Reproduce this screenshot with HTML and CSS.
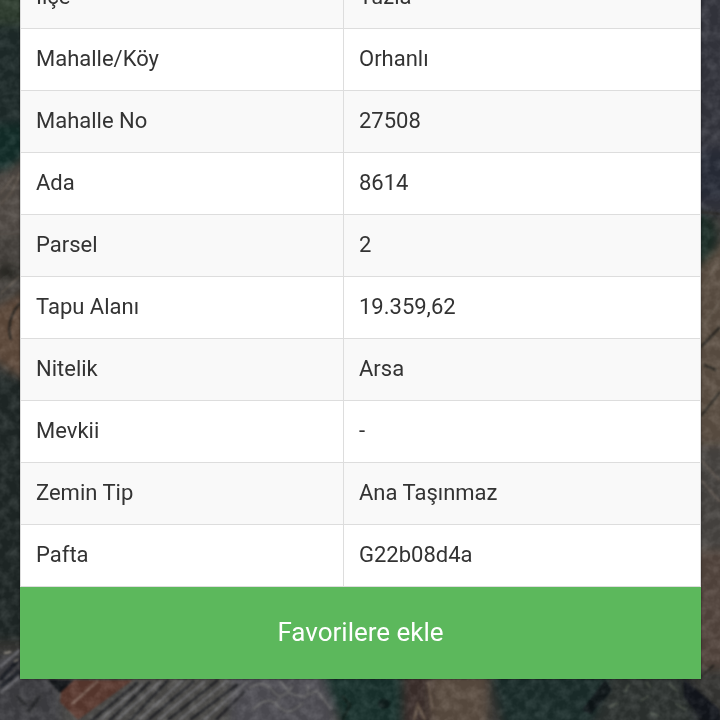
FILE: index.html
```html
<!DOCTYPE html>
<html lang="tr">
<head>
  <meta charset="UTF-8" />
  <meta name="viewport" content="width=device-width, initial-scale=1.0" />
  <title>Parsel Bilgisi</title>
  <link rel="stylesheet" href="styles.css">
</head>
<body>

<!-- satellite map -->
<svg class="map" viewBox="0 0 720 720" preserveAspectRatio="none" aria-hidden="true">
  <defs>
    <filter id="soft" x="-20%" y="-20%" width="140%" height="140%" color-interpolation-filters="sRGB"><feGaussianBlur stdDeviation="4"/></filter>
    <filter id="fine" color-interpolation-filters="sRGB"><feGaussianBlur stdDeviation="0.9"/></filter>
    <filter id="grain" x="0" y="0" width="100%" height="100%" color-interpolation-filters="sRGB">
      <feTurbulence type="fractalNoise" baseFrequency="0.1" numOctaves="3" seed="8"/>
      <feColorMatrix type="matrix" values="1.6 0 0 0 -0.58  1.6 0 0 0 -0.58  1.6 0 0 0 -0.58  0 0 0 0 0.12"/>
    </filter>
  </defs>
  <rect width="720" height="720" fill="#3b3b38"/>

  <!-- left edge -->
  <g filter="url(#soft)">
    <rect x="-20" y="-20" width="60" height="50" fill="#2f3f30"/>
    <rect x="-20" y="25" width="60" height="105" fill="#202e2d"/>
    <rect x="-20" y="125" width="60" height="45" fill="#14302c"/>
    <path d="M-20 190L40 145V260H-20Z" fill="#57504a"/>
    <rect x="-20" y="235" width="60" height="80" fill="#494540"/>
    <path d="M-20 315L40 285V390L-20 350Z" fill="#665040"/>
    <path d="M-20 368L40 385V640H-20Z" fill="#222b2a"/>
    <rect x="-20" y="655" width="100" height="80" fill="#434347"/>
    <ellipse cx="8" cy="272" rx="12" ry="5" fill="#24241f"/>
  </g>

  <!-- right edge -->
  <g filter="url(#soft)">
    <rect x="690" y="-20" width="60" height="235" fill="#383942"/>
    <rect x="690" y="150" width="60" height="50" fill="#2c303d"/>
    <ellipse cx="700" cy="238" rx="16" ry="26" fill="#1c2f28"/>
    <path d="M690 275L740 225V460H690Z" fill="#625548"/>
    <rect x="690" y="445" width="50" height="110" fill="#4d4946"/>
    <rect x="690" y="550" width="50" height="120" fill="#594b43"/>
  </g>

  <!-- bottom edge -->
  <g filter="url(#soft)">
    <rect x="60" y="670" width="210" height="60" fill="#52514f"/>
    <rect x="230" y="670" width="105" height="60" fill="#55545a"/>
    <path d="M322 670H405V730H345Z" fill="#1b3530"/>
    <rect x="402" y="670" width="28" height="60" fill="#40332f"/>
    <rect x="430" y="670" width="58" height="60" fill="#615246"/>
    <path d="M490 670H610V730H505Z" fill="#1d302e"/>
    <path d="M612 670H680L700 730H590Z" fill="#303634"/>
    <path d="M680 670L735 735H700Z" fill="#15181d"/>
  </g>

  <g filter="url(#fine)">
    <!-- sheds and roofs -->
    <path d="M62 680H133L78 720L60 702Z" fill="#603d33"/>
    <path d="M72 704L98 681" stroke="#8a7164" stroke-width="2"/>
    <path d="M48 680L60 693L74 680" fill="#14171b"/>
    <g stroke="#25262a" stroke-width="2.5">
      <path d="M90 722L138 682M108 722L150 682M129 722L168 680M146 722L194 681M168 720L218 680M190 720L238 684M216 720L245 691"/>
    </g>
    <g stroke="#77777a" stroke-width="2">
      <path d="M100 720L143 684M117 720L160 682M139 720L183 680M158 720L205 681M179 720L228 680M204 720L248 681"/>
    </g>
    <path d="M0 687L20 671M0 680L20 658" stroke="#1b1e25" stroke-width="4"/>
    <path d="M0 693L20 677M0 667L20 650" stroke="#6d6d72" stroke-width="3"/>
    <path d="M4 653l7-1M14 662l5-3" stroke="#969087" stroke-width="2"/>
    <path d="M28 712l12-16M17 697l10 9" stroke="#2a2b2e" stroke-width="3"/>
    <!-- rubble -->
    <g stroke="#898886" stroke-width="1.5" fill="none" opacity=".6">
      <path d="M249 688q15-9 24 3t19-5M276 703q6-14 20-8t12-9M253 710q14-16 25-4t24-3M305 696l12-5 14 18M280 681l12 14"/>
    </g>
    <!-- trees and road -->
    <ellipse cx="384" cy="704" rx="6" ry="5" fill="#101f1e"/>
    <path d="M342 720l8-15-8-9" stroke="#13231f" stroke-width="3" fill="none"/>
    <path d="M414 720l4-15 7 15M428 682l5 28" stroke="#6b5b4e" stroke-width="3" fill="none"/>
    <path d="M605 680L582 710L591 714L612 690Z" fill="#0e1619"/>
    <g stroke="#6c7365" stroke-width="2" opacity=".6">
      <path d="M609 707l9-4M625 692l4-8M640 701l9-5M650 713l9 3M669 684l8 7M646 682l5 6M676 704l10 6"/>
    </g>
    <path d="M684 680L720 710V725H709L684 697Z" fill="#14171e"/>
    <!-- tracks at the sides -->
    <g stroke="#807367" stroke-width="2" fill="none" opacity=".5">
      <path d="M0 204Q14 194 20 173M0 194L14 176M0 294L20 276M701 288L720 260M701 329L720 302M701 480L720 502M701 460L720 481"/>
    </g>
    <g stroke="#262420" stroke-width="2" fill="none">
      <path d="M20 303Q5 320 11 340M701 347L720 327M701 416L720 392M701 212L720 214M701 677L714 665M704 365L716 370"/>
    </g>
  </g>
  <rect width="720" height="720" filter="url(#grain)"/>
</svg>

<!-- parcel popup -->
<main class="popup">
  <table class="parcel">
    <tbody>
      <tr><th scope="row">İlçe</th><td>Tuzla</td></tr>
      <tr><th scope="row">Mahalle/Köy</th><td>Orhanlı</td></tr>
      <tr><th scope="row">Mahalle No</th><td>27508</td></tr>
      <tr><th scope="row">Ada</th><td>8614</td></tr>
      <tr><th scope="row">Parsel</th><td>2</td></tr>
      <tr><th scope="row">Tapu Alanı</th><td>19.359,62</td></tr>
      <tr><th scope="row">Nitelik</th><td>Arsa</td></tr>
      <tr><th scope="row">Mevkii</th><td>-</td></tr>
      <tr><th scope="row">Zemin Tip</th><td>Ana Taşınmaz</td></tr>
      <tr><th scope="row">Pafta</th><td>G22b08d4a</td></tr>
    </tbody>
  </table>
  <button type="button" class="favorite">Favorilere ekle</button>
</main>

</body>
</html>
```
FILE: styles.css
```css
/* page base */
* {
  box-sizing: border-box;
}

body {
  margin: 0;
  min-height: 100vh;
  overflow: hidden;
  background: #3b3b38;
  color: #333;
  font-family: Roboto, sans-serif;
  font-size: 22px;
  line-height: 30px;
}

/* map behind the popup */
.map {
  position: fixed;
  inset: 0;
  z-index: -1;
  width: 100%;
  height: 100%;
}

/* popup, scrolled to its last rows */
.popup {
  margin: -34px 19px 0 20px;
  background: #fff;
  box-shadow: 0 0 2px rgba(0, 0, 0, 0.6);
}

/* parcel table */
.parcel {
  width: 100%;
  table-layout: fixed;
  border-collapse: collapse;
}

.parcel th,
.parcel td {
  height: 62px;
  padding: 14px 15px 16px;
  border: 1px solid #ddd;
  font-weight: normal;
  text-align: left;
}

.parcel th {
  width: 323px;
}

.parcel tr:nth-child(odd) {
  background: #f9f9f9;
}

/* favorite button */
.favorite {
  display: block;
  width: 100%;
  padding: 30px 16px 32px;
  border: 0;
  background: #5cb85c;
  color: #fff;
  font-family: inherit;
  font-size: 26px;
  line-height: 30px;
  cursor: pointer;
}
```
